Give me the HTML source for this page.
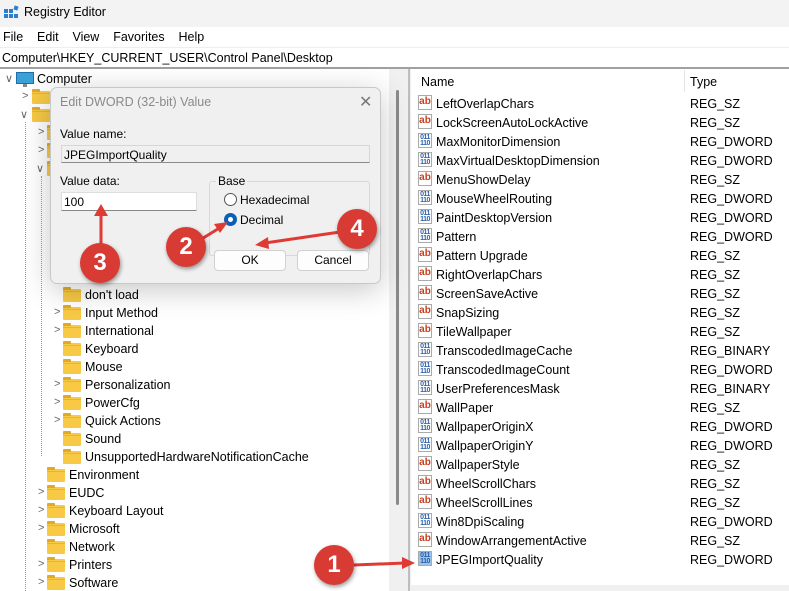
<!DOCTYPE html>
<html><head><meta charset="utf-8"><style>
*{margin:0;padding:0;box-sizing:border-box}
body{width:789px;height:591px;overflow:hidden;background:#fff;font-family:"Liberation Sans",sans-serif;font-size:12px;color:#000;position:relative}
.a{position:absolute;white-space:nowrap}
.fo{position:absolute;width:18px;height:13px;background:#f7c945;border-radius:1px}
.fo:before{content:"";position:absolute;left:0;top:-2px;width:8px;height:3px;background:#e0a92a;border-radius:1px 1px 0 0}
.fo:after{content:"";position:absolute;left:0;top:2px;width:18px;height:1px;background:#e7b43a}
.ch{position:absolute;font-size:11px;color:#666}
.ico{position:absolute;width:14px;height:15px;border:1px solid #aaa;background:#fff;font-size:10px;font-weight:bold;line-height:12px;text-align:center}
.sz{color:#c8401e}
.dw{color:#2a5fa8;font-size:7px;line-height:6px;letter-spacing:-0.5px;padding-top:1px}
.circ{position:absolute;width:40px;height:40px;border-radius:50%;background:#d83a34;color:#fff;font-weight:bold;font-size:24px;text-align:center;line-height:40px;box-shadow:1px 2px 4px rgba(0,0,0,.4)}
</style></head><body>
<div class="a" style="left:0;top:0;width:789px;height:27px;background:#f3f3f3"></div>
<svg class="a" style="left:3px;top:5px" width="16" height="16"><rect x="1" y="4" width="4" height="4" fill="#2a7fd0"/><rect x="6" y="4" width="4" height="4" fill="#2a7fd0"/><rect x="1" y="9" width="4" height="4" fill="#2a7fd0"/><rect x="6" y="9" width="4" height="4" fill="#2a7fd0"/><rect x="11" y="9" width="4" height="4" fill="#2a7fd0"/><rect x="11" y="1" width="4" height="4" fill="#2a7fd0" transform="rotate(20 13 3)"/></svg>
<div class="a" style="left:24px;top:5px;font-size:12.5px">Registry Editor</div>
<div class="a" style="left:3px;top:30px;font-size:12.5px;word-spacing:0">File&nbsp;&nbsp;&nbsp;&nbsp;Edit&nbsp;&nbsp;&nbsp;&nbsp;View&nbsp;&nbsp;&nbsp;&nbsp;Favorites&nbsp;&nbsp;&nbsp;&nbsp;Help</div>
<div class="a" style="left:0;top:47px;width:789px;height:1px;background:#eee"></div>
<div class="a" style="left:2px;top:51px;font-size:12.5px">Computer\HKEY_CURRENT_USER\Control Panel\Desktop</div>
<div class="a" style="left:0;top:67px;width:789px;height:2px;background:#a0a0a0"></div>
<div class="a" style="left:389px;top:69px;width:22px;height:522px;background:#f0f0f0"></div>
<div class="a" style="left:396px;top:90px;width:3px;height:415px;background:#8a8a8a;border-radius:2px"></div>
<div class="a" style="left:408px;top:69px;width:2px;height:522px;background:#bdbdbd"></div>
<div class="ch" style="left:5px;top:72px">&#x2228;</div>
<div class="a" style="left:16px;top:72px;width:18px;height:12px;background:#3aa0d8;border:1px solid #1c6fa8"></div>
<div class="a" style="left:23px;top:84px;width:4px;height:3px;background:#888"></div>
<div class="a" style="left:37px;top:72px;font-size:12.5px">Computer</div>
<div class="ch" style="left:22px;top:90px">&gt;</div><div class="fo" style="left:32px;top:91px"></div>
<div class="ch" style="left:20px;top:108px">&#x2228;</div><div class="fo" style="left:32px;top:109px"></div>
<div class="ch" style="left:38px;top:126px">&gt;</div><div class="fo" style="left:47px;top:127px"></div>
<div class="ch" style="left:38px;top:144px">&gt;</div><div class="fo" style="left:47px;top:145px"></div>
<div class="ch" style="left:36px;top:162px">&#x2228;</div><div class="fo" style="left:47px;top:163px"></div>
<div class="a" style="left:25px;top:122px;width:0;height:469px;border-left:1px dotted #999"></div>
<div class="a" style="left:41px;top:176px;width:0;height:280px;border-left:1px dotted #999"></div>

<div class="fo" style="left:63px;top:289px"></div><div class="a" style="left:85px;top:288px;font-size:12.5px">don't load</div>
<div class="ch" style="left:54px;top:306px">&gt;</div><div class="fo" style="left:63px;top:307px"></div><div class="a" style="left:85px;top:306px;font-size:12.5px">Input Method</div>
<div class="ch" style="left:54px;top:324px">&gt;</div><div class="fo" style="left:63px;top:325px"></div><div class="a" style="left:85px;top:324px;font-size:12.5px">International</div>
<div class="fo" style="left:63px;top:343px"></div><div class="a" style="left:85px;top:342px;font-size:12.5px">Keyboard</div>
<div class="fo" style="left:63px;top:361px"></div><div class="a" style="left:85px;top:360px;font-size:12.5px">Mouse</div>
<div class="ch" style="left:54px;top:378px">&gt;</div><div class="fo" style="left:63px;top:379px"></div><div class="a" style="left:85px;top:378px;font-size:12.5px">Personalization</div>
<div class="ch" style="left:54px;top:396px">&gt;</div><div class="fo" style="left:63px;top:397px"></div><div class="a" style="left:85px;top:396px;font-size:12.5px">PowerCfg</div>
<div class="ch" style="left:54px;top:414px">&gt;</div><div class="fo" style="left:63px;top:415px"></div><div class="a" style="left:85px;top:414px;font-size:12.5px">Quick Actions</div>
<div class="fo" style="left:63px;top:433px"></div><div class="a" style="left:85px;top:432px;font-size:12.5px">Sound</div>
<div class="fo" style="left:63px;top:451px"></div><div class="a" style="left:85px;top:450px;font-size:12.5px">UnsupportedHardwareNotificationCache</div>
<div class="fo" style="left:47px;top:469px"></div><div class="a" style="left:69px;top:468px;font-size:12.5px">Environment</div>
<div class="ch" style="left:38px;top:486px">&gt;</div><div class="fo" style="left:47px;top:487px"></div><div class="a" style="left:69px;top:486px;font-size:12.5px">EUDC</div>
<div class="ch" style="left:38px;top:504px">&gt;</div><div class="fo" style="left:47px;top:505px"></div><div class="a" style="left:69px;top:504px;font-size:12.5px">Keyboard Layout</div>
<div class="ch" style="left:38px;top:522px">&gt;</div><div class="fo" style="left:47px;top:523px"></div><div class="a" style="left:69px;top:522px;font-size:12.5px">Microsoft</div>
<div class="fo" style="left:47px;top:541px"></div><div class="a" style="left:69px;top:540px;font-size:12.5px">Network</div>
<div class="ch" style="left:38px;top:558px">&gt;</div><div class="fo" style="left:47px;top:559px"></div><div class="a" style="left:69px;top:558px;font-size:12.5px">Printers</div>
<div class="ch" style="left:38px;top:576px">&gt;</div><div class="fo" style="left:47px;top:577px"></div><div class="a" style="left:69px;top:576px;font-size:12.5px">Software</div>

<div class="a" style="left:421px;top:75px;font-size:12.5px">Name</div>
<div class="a" style="left:684px;top:70px;width:1px;height:22px;background:#e5e5e5"></div>
<div class="a" style="left:690px;top:75px;font-size:12.5px">Type</div>
<div id="list"></div>
<div class="a" style="left:410px;top:585px;width:379px;height:6px;background:#f0f0f0"></div>

<div class="a" style="left:50px;top:87px;width:331px;height:197px;background:#f0f0f0;border:1px solid #c8c8c8;border-radius:7px;box-shadow:0 6px 30px rgba(0,0,0,.22)"></div>
<div class="a" style="left:60px;top:95px;font-size:12.5px;color:#8a8a8a">Edit DWORD (32-bit) Value</div>
<div class="a" style="left:359px;top:92px;font-size:16px;color:#777">&#x2715;</div>
<div class="a" style="left:60px;top:127px;font-size:12px">Value name:</div>
<div class="a" style="left:61px;top:145px;width:309px;height:18px;background:#f0f0f0;border:1px solid #d6d6d6;border-bottom-color:#8a8a8a;padding:2px 2px;font-size:12px">JPEGImportQuality</div>
<div class="a" style="left:60px;top:174px;font-size:12px">Value data:</div>
<div class="a" style="left:61px;top:192px;width:136px;height:19px;background:#fff;border:1px solid #ddd;border-bottom-color:#888;padding:2px 2px;font-size:12px">100</div>
<div class="a" style="left:209px;top:181px;width:161px;height:75px;border:1px solid #d8d8d8;border-radius:3px"></div>
<div class="a" style="left:216px;top:174px;padding:0 2px;background:#f0f0f0;font-size:12px">Base</div>
<div class="a" style="left:224px;top:193px;width:13px;height:13px;border:1px solid #555;border-radius:50%;background:#fff"></div>
<div class="a" style="left:240px;top:193px;font-size:12px">Hexadecimal</div>
<div class="a" style="left:224px;top:213px;width:13px;height:13px;border-radius:50%;background:#0a5fb8"></div>
<div class="a" style="left:228px;top:217px;width:5px;height:5px;border-radius:50%;background:#fff"></div>
<div class="a" style="left:240px;top:213px;font-size:12px">Decimal</div>
<div class="a" style="left:214px;top:250px;width:72px;height:21px;background:#fdfdfd;border:1px solid #d0d0d0;border-radius:4px;text-align:center;line-height:19px;font-size:12px">OK</div>
<div class="a" style="left:297px;top:250px;width:72px;height:21px;background:#fdfdfd;border:1px solid #d0d0d0;border-radius:4px;text-align:center;line-height:19px;font-size:12px">Cancel</div>

<svg class="a" style="left:0;top:0" width="789" height="591">
<g stroke="#e03a35" stroke-width="3" fill="#e03a35">
<line x1="101" y1="245" x2="101" y2="212"/><polygon points="101,204 94,216 108,216" stroke="none"/>
<line x1="200" y1="240" x2="221" y2="227"/><polygon points="228,222 214,224 220,233" stroke="none"/>
<line x1="340" y1="232" x2="265" y2="243"/><polygon points="255,245 268,237 269,249" stroke="none"/>
<line x1="354" y1="565" x2="405" y2="563"/><polygon points="415,563 402,557 402,569" stroke="none"/>
</g></svg>
<div class="circ" style="left:80px;top:243px">3</div>
<div class="circ" style="left:166px;top:227px">2</div>
<div class="circ" style="left:337px;top:209px">4</div>
<div class="circ" style="left:314px;top:545px">1</div>

<script>
var items=[["LeftOverlapChars","REG_SZ"],["LockScreenAutoLockActive","REG_SZ"],["MaxMonitorDimension","REG_DWORD"],["MaxVirtualDesktopDimension","REG_DWORD"],["MenuShowDelay","REG_SZ"],["MouseWheelRouting","REG_DWORD"],["PaintDesktopVersion","REG_DWORD"],["Pattern","REG_DWORD"],["Pattern Upgrade","REG_SZ"],["RightOverlapChars","REG_SZ"],["ScreenSaveActive","REG_SZ"],["SnapSizing","REG_SZ"],["TileWallpaper","REG_SZ"],["TranscodedImageCache","REG_BINARY"],["TranscodedImageCount","REG_DWORD"],["UserPreferencesMask","REG_BINARY"],["WallPaper","REG_SZ"],["WallpaperOriginX","REG_DWORD"],["WallpaperOriginY","REG_DWORD"],["WallpaperStyle","REG_SZ"],["WheelScrollChars","REG_SZ"],["WheelScrollLines","REG_SZ"],["Win8DpiScaling","REG_DWORD"],["WindowArrangementActive","REG_SZ"],["JPEGImportQuality","REG_DWORD"]];
var h="";items.forEach(function(it,i){var y=103+i*19;var sz=it[1]=="REG_SZ";
var last=i==24;
h+='<div class="ico '+(sz?'sz':'dw')+'" style="left:418px;top:'+(y-8)+'px;'+(last?'background:#9cc3ea;':'')+'">'+(sz?'ab':'011<br>110')+'</div>';
h+='<div class="a" style="left:436px;top:'+(y-6)+'px;font-size:12.5px">'+it[0]+'</div>';
h+='<div class="a" style="left:690px;top:'+(y-6)+'px;font-size:12.5px">'+it[1]+'</div>';});
document.getElementById("list").innerHTML=h;
</script>
</body></html>
